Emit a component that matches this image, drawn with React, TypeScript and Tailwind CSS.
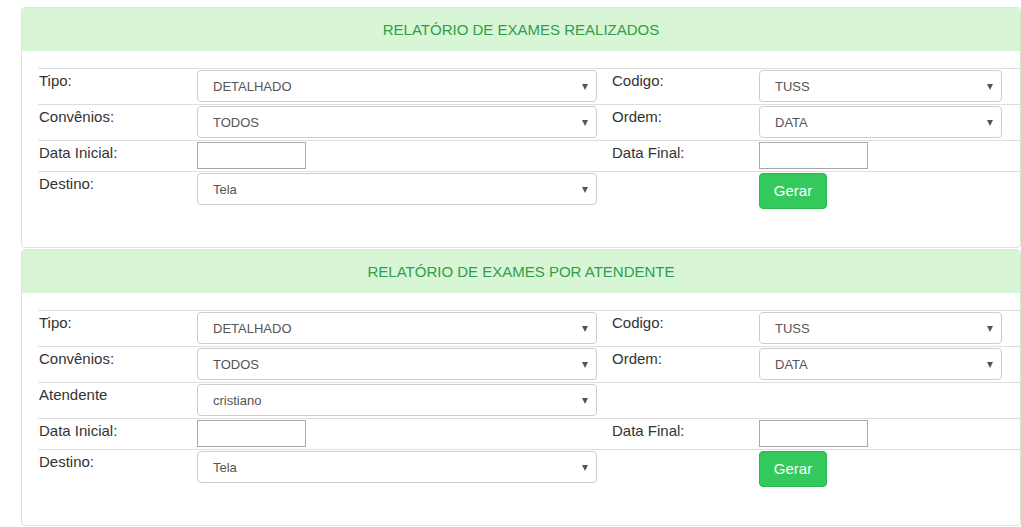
import React from "react";

type Field =
  | { kind: "select"; value: string; wide?: boolean }
  | { kind: "date" }
  | { kind: "button"; label: string }
  | { kind: "none" };

type Row = {
  label: string;
  field: Field;
  label2?: string;
  field2?: Field;
};

const Select = ({ value, wide }: { value: string; wide?: boolean }) => (
  <div
    className={`relative flex h-[32px] items-center rounded-[4px] border border-[#cccccc] bg-white pl-[15px] pt-[2px] text-[13px] text-[#555555] ${
      wide ? "w-[400px]" : "w-[243px]"
    }`}
  >
    {value}
    <span className="absolute right-[8px] top-[13px] h-0 w-0 border-x-[3px] border-t-[6px] border-x-transparent border-t-[#555555]" />
  </div>
);

const FieldCell = ({ field }: { field?: Field }) => {
  if (!field || field.kind === "none") return <div />;
  if (field.kind === "select")
    return <Select value={field.value} wide={field.wide} />;
  if (field.kind === "date")
    return (
      <input
        type="text"
        className="block h-[27px] w-[109px] border border-[#a9a9a9] bg-white outline-none"
      />
    );
  return (
    <button className="block h-[36px] w-[68px] rounded-[4px] border border-[#2bb852] bg-[#34c95c] text-[15px] text-white">
      {field.label}
    </button>
  );
};

const Panel = ({ title, rows }: { title: string; rows: Row[] }) => (
  <div className="w-[1000px] overflow-hidden rounded-[4px] border border-[#cdeec9] bg-white">
    <div className="flex h-[43px] items-center justify-center bg-[#d8f5d6] pt-[1px] text-[15px] text-[#2f9e4a]">
      {title}
    </div>
    <div className="pb-[36px] pl-[16px] pt-[17px]">
      {rows.map((r, i) => (
        <div
          key={i}
          className="grid grid-cols-[159px_415px_147px_244px] border-t border-[#dddddd] pb-[2px] pt-[1px]"
        >
          <div className="pl-[1px] text-[15px] leading-[21px] text-[#333333]">
            {r.label}
          </div>
          <div>
            <FieldCell field={r.field} />
          </div>
          <div className="text-[15px] leading-[21px] text-[#333333]">
            {r.label2}
          </div>
          <div>
            <FieldCell field={r.field2} />
          </div>
        </div>
      ))}
    </div>
  </div>
);

const App = () => {
  const first: Row[] = [
    { label: "Tipo:", field: { kind: "select", value: "DETALHADO", wide: true }, label2: "Codigo:", field2: { kind: "select", value: "TUSS" } },
    { label: "Convênios:", field: { kind: "select", value: "TODOS", wide: true }, label2: "Ordem:", field2: { kind: "select", value: "DATA" } },
    { label: "Data Inicial:", field: { kind: "date" }, label2: "Data Final:", field2: { kind: "date" } },
    { label: "Destino:", field: { kind: "select", value: "Tela", wide: true }, field2: { kind: "button", label: "Gerar" } },
  ];

  const second: Row[] = [
    { label: "Tipo:", field: { kind: "select", value: "DETALHADO", wide: true }, label2: "Codigo:", field2: { kind: "select", value: "TUSS" } },
    { label: "Convênios:", field: { kind: "select", value: "TODOS", wide: true }, label2: "Ordem:", field2: { kind: "select", value: "DATA" } },
    { label: "Atendente", field: { kind: "select", value: "cristiano", wide: true } },
    { label: "Data Inicial:", field: { kind: "date" }, label2: "Data Final:", field2: { kind: "date" } },
    { label: "Destino:", field: { kind: "select", value: "Tela", wide: true }, field2: { kind: "button", label: "Gerar" } },
  ];

  return (
    <div className="min-h-[527px] bg-white pl-[21px] pt-[7px] font-['Liberation_Sans',Arial,sans-serif]">
      <Panel title="RELATÓRIO DE EXAMES REALIZADOS" rows={first} />
      <div className="mt-[1px]">
        <Panel title="RELATÓRIO DE EXAMES POR ATENDENTE" rows={second} />
      </div>
    </div>
  );
};

export default App;
